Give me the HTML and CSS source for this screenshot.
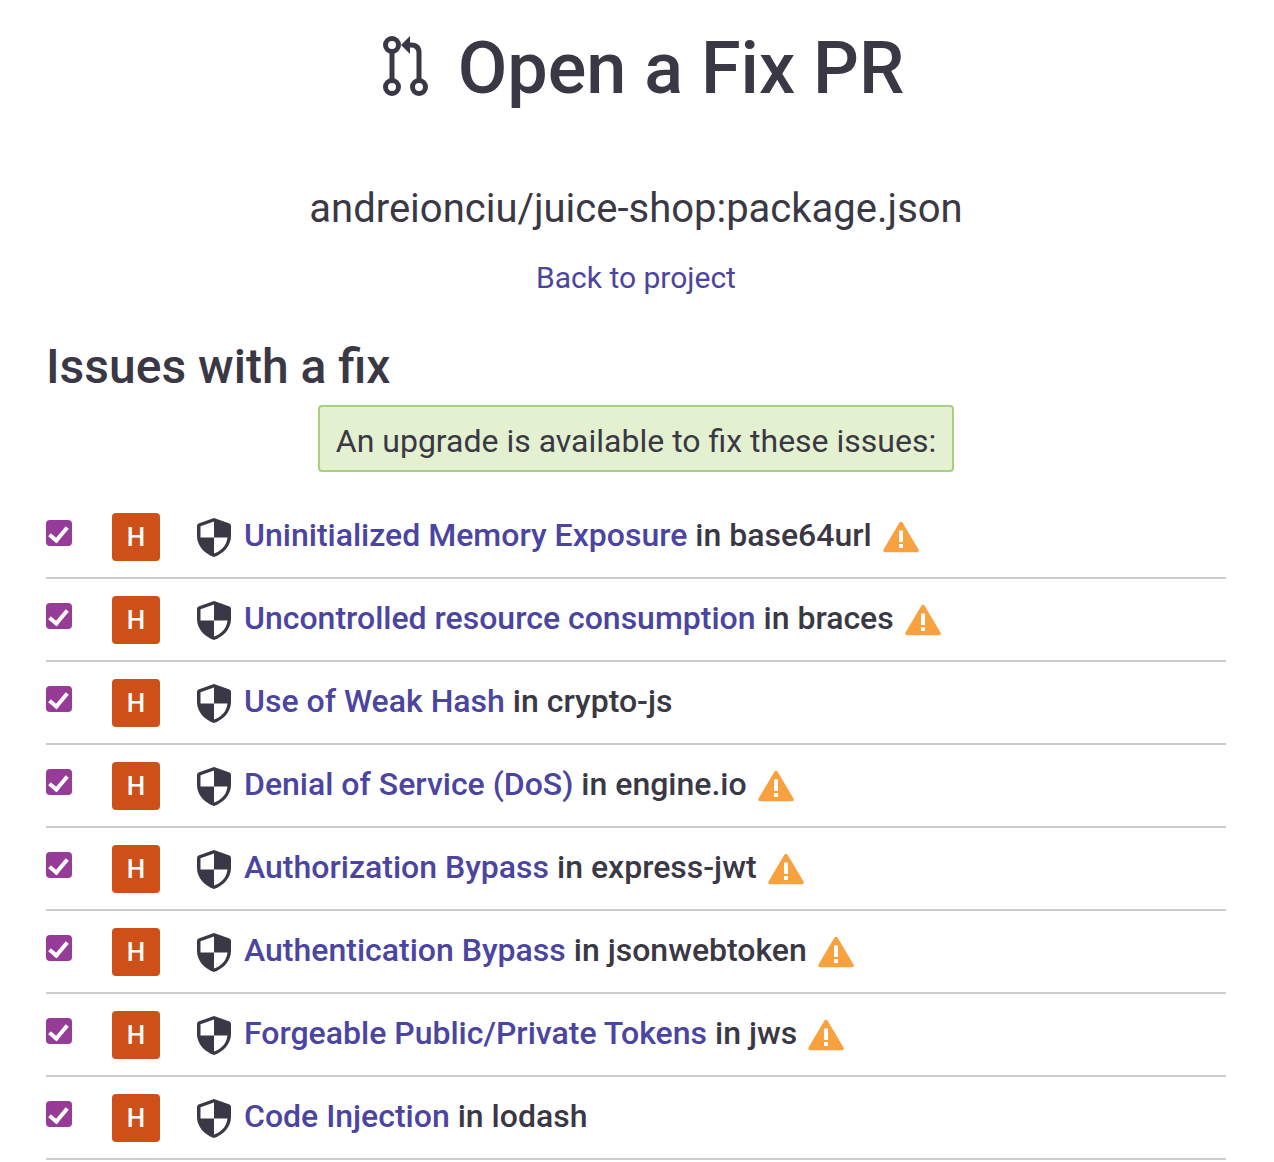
FILE: index.html
```html
<!DOCTYPE html>
<html lang="en">
  <head>
    <meta charset="UTF-8" />
    <title>Open a Fix PR</title>
    <link rel="stylesheet" href="styles.css">
  </head>
  <body>
    <svg class="defs" width="0" height="0">
      <symbol id="shield" viewBox="0 0 34 39">
        <path d="M17 0 L32.500 5.500 Q34 6 34 8 V18 C34 28 26 36 17 39 C8 36 0 28 0 18 V8 Q0 6 1.500 5.500 Z" fill="#3a3845"/>
        <path d="M17 3.500 L3.500 8.300 V19.500 H17 Z M17 19.500 H30.500 C29.500 28 24 33 17 35.500 Z" fill="#fff"/>
      </symbol>
      <symbol id="warn" viewBox="0 0 36 32">
        <path d="M18 2.500 L34 29.500 L2 29.500 Z" fill="#f8a13f" stroke="#f8a13f" stroke-width="3.500" stroke-linejoin="round"/>
        <rect x="16" y="9.500" width="4" height="11.500" fill="#fff"/>
        <rect x="16" y="23" width="4" height="4" fill="#fff"/>
      </symbol>
    </svg>

    <header class="top">
      <h1 class="title">
        <svg class="pr-icon" viewBox="0 0 48 64" fill="none" stroke="#3a3845" stroke-width="5">
          <circle cx="10" cy="10" r="6.500"/>
          <circle cx="10" cy="52" r="6.500"/>
          <circle cx="37" cy="52" r="6.500"/>
          <path d="M10 17 V45"/>
          <path d="M37 45 V18 Q37 10 29 10 H26"/>
          <path d="M28 1 V19 L19 10 Z" fill="#3a3845" stroke="none"/>
        </svg>
        Open a Fix PR
      </h1>
      <div class="target">andreionciu/juice-shop:package.json</div>
      <a class="back" href="#">Back to project</a>
    </header>

    <h2 class="section">Issues with a fix</h2>
    <div class="notice-wrap">
      <div class="notice">An upgrade is available to fix these issues:</div>
    </div>

    <ul class="issues">
      <li class="issue">
        <input class="check" type="checkbox" checked />
        <span class="sev">H</span>
        <svg class="shield"><use href="#shield"/></svg>
        <span class="desc"><a href="#">Uninitialized Memory Exposure</a> in base64url</span>
        <svg class="warn"><use href="#warn"/></svg>
      </li>
      <li class="issue">
        <input class="check" type="checkbox" checked />
        <span class="sev">H</span>
        <svg class="shield"><use href="#shield"/></svg>
        <span class="desc"><a href="#">Uncontrolled resource consumption</a> in braces</span>
        <svg class="warn"><use href="#warn"/></svg>
      </li>
      <li class="issue">
        <input class="check" type="checkbox" checked />
        <span class="sev">H</span>
        <svg class="shield"><use href="#shield"/></svg>
        <span class="desc"><a href="#">Use of Weak Hash</a> in crypto-js</span>
      </li>
      <li class="issue">
        <input class="check" type="checkbox" checked />
        <span class="sev">H</span>
        <svg class="shield"><use href="#shield"/></svg>
        <span class="desc"><a href="#">Denial of Service (DoS)</a> in engine.io</span>
        <svg class="warn"><use href="#warn"/></svg>
      </li>
      <li class="issue">
        <input class="check" type="checkbox" checked />
        <span class="sev">H</span>
        <svg class="shield"><use href="#shield"/></svg>
        <span class="desc"><a href="#">Authorization Bypass</a> in express-jwt</span>
        <svg class="warn"><use href="#warn"/></svg>
      </li>
      <li class="issue">
        <input class="check" type="checkbox" checked />
        <span class="sev">H</span>
        <svg class="shield"><use href="#shield"/></svg>
        <span class="desc"><a href="#">Authentication Bypass</a> in jsonwebtoken</span>
        <svg class="warn"><use href="#warn"/></svg>
      </li>
      <li class="issue">
        <input class="check" type="checkbox" checked />
        <span class="sev">H</span>
        <svg class="shield"><use href="#shield"/></svg>
        <span class="desc"><a href="#">Forgeable Public/Private Tokens</a> in jws</span>
        <svg class="warn"><use href="#warn"/></svg>
      </li>
      <li class="issue">
        <input class="check" type="checkbox" checked />
        <span class="sev">H</span>
        <svg class="shield"><use href="#shield"/></svg>
        <span class="desc"><a href="#">Code Injection</a> in lodash</span>
      </li>
    </ul>
  </body>
</html>
```

FILE: styles.css
```css
body {
  margin: 0;
  padding: 0 48px 0 46px;
  height: 1162px;
  overflow: hidden;
  background: #fff;
  color: #3a3845;
  font-family: Roboto, sans-serif;
}

a {
  color: #4b45a1;
  text-decoration: none;
}

.defs {
  display: block;
}

.top {
  display: flex;
  flex-direction: column;
  align-items: center;
}

.title {
  display: flex;
  align-items: center;
  gap: 28px;
  margin: 25px 0 0;
  padding-left: 14px;
  height: 88px;
  font-size: 72px;
  font-weight: 500;
  line-height: 88px;
}

.pr-icon {
  width: 48px;
  height: 64px;
  margin-top: -4px;
}

.target {
  margin-top: 71px;
  height: 50px;
  font-size: 40px;
  line-height: 50px;
}

.back {
  margin-top: 24px;
  font-size: 30px;
  line-height: 40px;
}

.section {
  margin: 39px 0 0;
  font-size: 48px;
  font-weight: 500;
  line-height: 60px;
}

.notice-wrap {
  display: flex;
  justify-content: center;
}

.notice {
  margin-top: 8px;
  padding: 0 16px;
  height: 63px;
  line-height: 68px;
  background: #e3f1d0;
  border: 2px solid #a9cf80;
  border-radius: 4px;
  font-size: 32px;
}

.issues {
  list-style: none;
  margin: 24px 0 0;
  padding: 0;
}

.issue {
  display: flex;
  align-items: center;
  height: 81px;
  border-bottom: 2px solid #ccc;
}

.check {
  appearance: none;
  width: 26px;
  height: 26px;
  margin: -8px 40px 0 0;
  background: #973b98;
  border-radius: 4px;
  position: relative;
}

.check::after {
  content: "";
  position: absolute;
  left: 3px;
  top: 7px;
  width: 15px;
  height: 7px;
  border-left: 4.500px solid #fff;
  border-bottom: 4.500px solid #fff;
  transform: rotate(-50deg);
}

.sev {
  width: 48px;
  height: 48px;
  background: #ce5019;
  border-radius: 4px;
  color: #fff;
  font-size: 26px;
  font-weight: 500;
  line-height: 48px;
  text-align: center;
}

.shield {
  width: 34px;
  height: 39px;
  margin: 2px 13px 0 37px;
}

.desc {
  margin-top: -4px;
  font-size: 32px;
  font-weight: 500;
}

.warn {
  width: 36px;
  height: 32px;
  margin: 1px 0 0 11px;
}
```
